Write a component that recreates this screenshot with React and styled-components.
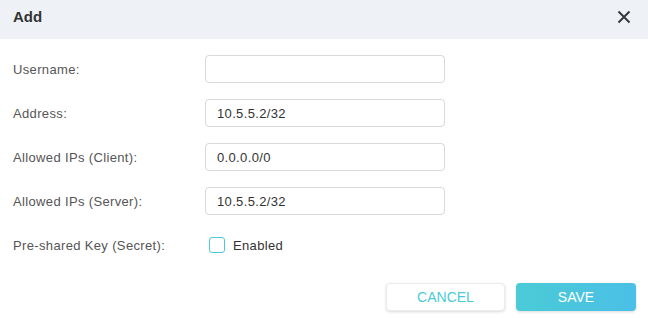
import React from "react";
import styled, { createGlobalStyle } from "styled-components";

const GlobalStyle = createGlobalStyle`
  html, body {
    margin: 0;
    padding: 0;
    background: #fff;
    font-family: "Liberation Sans", Arial, sans-serif;
  }
`;

const fields = [
  { label: "Username:", value: "" },
  { label: "Address:", value: "10.5.5.2/32" },
  { label: "Allowed IPs (Client):", value: "0.0.0.0/0" },
  { label: "Allowed IPs (Server):", value: "10.5.5.2/32" },
];

function App() {
  return (
    <Dialog>
      <GlobalStyle />
      <Header>
        <Title>Add</Title>
        <CloseButton aria-label="close">
          <svg width="14" height="14" viewBox="0 0 14 14">
            <path d="M1.5 1.5 L12.5 12.5 M12.5 1.5 L1.5 12.5" stroke="#333a40" strokeWidth="2" fill="none" />
          </svg>
        </CloseButton>
      </Header>
      <Form>
        {fields.map((f) => (
          <Row key={f.label}>
            <Label>{f.label}</Label>
            <TextInput defaultValue={f.value} />
          </Row>
        ))}
        <Row>
          <Label>Pre-shared Key (Secret):</Label>
          <CheckLabel>
            <Box />
            <span>Enabled</span>
          </CheckLabel>
        </Row>
      </Form>
      <Footer>
        <CancelButton>Cancel</CancelButton>
        <SaveButton>Save</SaveButton>
      </Footer>
    </Dialog>
  );
}

export default App;

const Dialog = styled.div`
  width: 648px;
  height: 318px;
  background: #fff;
  overflow: hidden;
`;

const Header = styled.div`
  height: 39px;
  background: #eef1f6;
  display: flex;
  align-items: center;
  justify-content: space-between;
  padding: 0 17px 0 13px;
  box-sizing: border-box;
`;

const Title = styled.div`
  font-size: 15px;
  font-weight: 700;
  color: #333;
  margin-top: -6px;
`;

const CloseButton = styled.div`
  display: flex;
  align-items: center;
  margin-top: -5px;
`;

const Form = styled.div`
  display: flex;
  flex-direction: column;
  gap: 16px;
  padding: 16px 12px 0 13px;
`;

const Row = styled.div`
  display: flex;
  align-items: center;
  height: 28px;
`;

const Label = styled.div`
  width: 192px;
  font-size: 13px;
  letter-spacing: 0.35px;
  color: #555;
`;

const TextInput = styled.input`
  width: 240px;
  height: 28px;
  box-sizing: border-box;
  border: 1px solid #d9d9d9;
  border-radius: 4px;
  padding: 0 11px;
  font-family: inherit;
  font-size: 13px;
  letter-spacing: 0.35px;
  color: #333;
  outline: none;
`;

const CheckLabel = styled.label`
  display: flex;
  align-items: center;
  gap: 8px;
  margin-left: 4px;
  font-size: 13px;
  letter-spacing: 0.35px;
  color: #333;
`;

const Box = styled.span`
  width: 16px;
  height: 16px;
  box-sizing: border-box;
  border: 1px solid #4acbd6;
  border-radius: 3px;
`;

const Footer = styled.div`
  display: flex;
  justify-content: flex-end;
  gap: 11px;
  padding: 24px 12px 0;
`;

const CancelButton = styled.button`
  width: 119px;
  height: 28px;
  border: 1px solid #ececec;
  border-radius: 4px;
  background: #fff;
  box-shadow: 0 1px 3px rgba(0, 0, 0, 0.15);
  color: #4acbd6;
  font-family: inherit;
  font-size: 14px;
  text-transform: uppercase;
  padding: 0;
`;

const SaveButton = styled(CancelButton)`
  width: 120px;
  border: none;
  background: linear-gradient(90deg, #4acbd6, #4bbfe6);
  color: #fff;
`;
